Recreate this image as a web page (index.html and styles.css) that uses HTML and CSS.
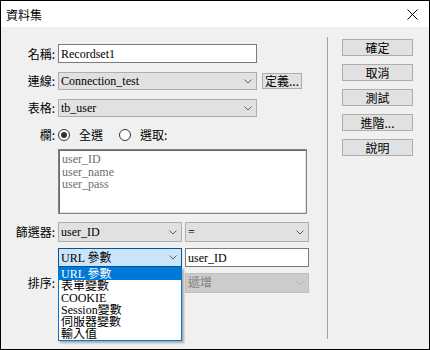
FILE: index.html
```html
<!DOCTYPE html>
<html lang="zh-Hant">
<head>
    <meta charset="UTF-8">
    <title>資料集</title>
    <link rel="stylesheet" href="styles.css">
</head>
<body>
    <div class="dialog">
        <div class="titlebar">
            <span class="title">資料集</span>
            <svg class="close" width="11" height="11" viewBox="0 0 11 11"><path d="M0.5 0.5L10.5 10.5M10.5 0.5L0.5 10.5" stroke="#000" stroke-width="1" fill="none"/></svg>
        </div>
        <div class="body">
            <div class="form">
                <div class="row row-name">
                    <span class="lbl">名稱:</span>
                    <div class="field text wide">Recordset1</div>
                </div>
                <div class="row row-conn">
                    <span class="lbl">連線:</span>
                    <div class="field select wide">
                        <span>Connection_test</span>
                        <svg class="chev" width="8" height="5" viewBox="0 0 8 5"><path d="M0.5 0.5L4 4L7.5 0.5" fill="none" stroke="#606060"/></svg>
                    </div>
                    <div class="btn btn-define">定義...</div>
                </div>
                <div class="row row-table">
                    <span class="lbl">表格:</span>
                    <div class="field select wide">
                        <span>tb_user</span>
                        <svg class="chev" width="8" height="5" viewBox="0 0 8 5"><path d="M0.5 0.5L4 4L7.5 0.5" fill="none" stroke="#606060"/></svg>
                    </div>
                </div>
                <div class="row row-cols">
                    <span class="lbl">欄:</span>
                    <span class="radio checked"></span>
                    <span class="radio-text">全選</span>
                    <span class="radio"></span>
                    <span class="radio-text">選取:</span>
                </div>
                <div class="listbox">
                    <div>user_ID</div>
                    <div>user_name</div>
                    <div>user_pass</div>
                </div>
                <div class="row row-filter">
                    <span class="lbl">篩選器:</span>
                    <div class="field select half">
                        <span>user_ID</span>
                        <svg class="chev" width="8" height="5" viewBox="0 0 8 5"><path d="M0.5 0.5L4 4L7.5 0.5" fill="none" stroke="#606060"/></svg>
                    </div>
                    <div class="field select half gap">
                        <span>=</span>
                        <svg class="chev" width="8" height="5" viewBox="0 0 8 5"><path d="M0.5 0.5L4 4L7.5 0.5" fill="none" stroke="#606060"/></svg>
                    </div>
                </div>
                <div class="row row-param">
                    <span class="lbl"></span>
                    <div class="field select half focused">
                        <span>URL 參數</span>
                        <svg class="chev" width="8" height="5" viewBox="0 0 8 5"><path d="M0.5 0.5L4 4L7.5 0.5" fill="none" stroke="#606060"/></svg>
                    </div>
                    <div class="field text half gap">user_ID</div>
                    <div class="dropdown">
                        <div class="option active">URL 參數</div>
                        <div class="option">表單變數</div>
                        <div class="option">COOKIE</div>
                        <div class="option">Session變數</div>
                        <div class="option">伺服器變數</div>
                        <div class="option">輸入值</div>
                    </div>
                </div>
                <div class="row row-sort">
                    <span class="lbl">排序:</span>
                    <div class="field select half disabled"></div>
                    <div class="field select half gap disabled">
                        <span>遞增</span>
                        <svg class="chev" width="8" height="5" viewBox="0 0 8 5"><path d="M0.5 0.5L4 4L7.5 0.5" fill="none" stroke="#b4b4b4"/></svg>
                    </div>
                </div>
            </div>
            <div class="sep"></div>
            <div class="actions">
                <div class="btn">確定</div>
                <div class="btn">取消</div>
                <div class="btn">測試</div>
                <div class="btn">進階...</div>
                <div class="btn">說明</div>
            </div>
        </div>
    </div>
</body>
</html>
```

FILE: styles.css
```css
body {
    margin: 0;
    font-family: "Noto Sans CJK TC", sans-serif;
    font-size: 12px;
    color: #000;
}
.dialog {
    width: 430px;
    height: 350px;
    border: 1px solid #000;
    box-sizing: border-box;
    background-color: #f0f0f0;
}
.titlebar {
    height: 26px;
    background-color: #fff;
    display: flex;
    align-items: center;
    justify-content: space-between;
    padding: 0 11px 0 5px;
}
.title {
    font-size: 12px;
    line-height: 1;
    margin-top: 1px;
}
.close {
    display: block;
}
.body {
    display: flex;
    height: 322px;
}
.form {
    width: 326px;
}
.row {
    display: flex;
    align-items: center;
    position: relative;
}
.lbl {
    width: 54px;
    padding-right: 3px;
    text-align: right;
    line-height: 1;
    flex-shrink: 0;
}
.row-name {
    margin-top: 17px;
    height: 19px;
}
.row-conn,
.row-table {
    margin-top: 9px;
    height: 18px;
}
.row-cols {
    margin-top: 11px;
    height: 14px;
}
.row-filter {
    margin-top: 8px;
    height: 20px;
}
.row-param {
    margin-top: 6px;
    height: 19px;
}
.row-sort {
    margin-top: 6px;
    height: 20px;
}
.field {
    height: 100%;
    box-sizing: border-box;
    display: flex;
    align-items: center;
    font-family: "Liberation Serif", "Noto Sans CJK TC", serif;
    font-size: 12px;
    line-height: 1;
    padding: 0 2px;
}
.field.wide {
    width: 199px;
}
.field.half {
    width: 124px;
}
.field.gap {
    margin-left: 3px;
}
.text {
    background-color: #fff;
    border: 1px solid #7a7a7a;
}
.select {
    background-color: #e1e1e1;
    border: 1px solid #adadad;
    justify-content: space-between;
    padding-right: 4px;
}
.select.focused {
    background-color: #cce4f7;
    border-color: #005499;
}
.select.disabled {
    background-color: #cccccc;
    border-color: #bfbfbf;
    color: #838383;
}
.chev {
    display: block;
}
.btn {
    background-color: #e1e1e1;
    border: 1px solid #adadad;
    box-sizing: border-box;
    text-align: center;
    line-height: 15px;
    height: 17px;
    font-size: 12px;
}
.btn-define {
    width: 40px;
    height: 16px;
    line-height: 14px;
    margin-left: 5px;
}
.radio {
    width: 12px;
    height: 12px;
    border: 1px solid #333;
    border-radius: 50%;
    box-sizing: border-box;
    background-color: #fff;
    position: relative;
}
.radio.checked::after {
    content: "";
    position: absolute;
    left: 2px;
    top: 2px;
    width: 6px;
    height: 6px;
    border-radius: 50%;
    background-color: #333;
}
.radio-text {
    margin-left: 9px;
    margin-right: 16px;
    line-height: 1;
}
.listbox {
    margin: 7px 0 0 57px;
    width: 249px;
    height: 65px;
    box-sizing: border-box;
    background-color: #fff;
    border: 1px solid #828282;
    box-shadow: inset 1px 1px 0 #696969, inset -1px -1px 0 #e3e3e3;
    padding: 3px 3px;
    font-family: "Liberation Serif", serif;
    font-size: 12px;
    line-height: 12.5px;
    color: #6d6d6d;
}
.dropdown {
    position: absolute;
    left: 57px;
    top: 19px;
    width: 124px;
    box-sizing: border-box;
    border: 1px solid #0078d7;
    background-color: #fff;
    box-shadow: 2px 2px 2px rgba(0,0,0,0.3);
    z-index: 2;
}
.option {
    height: 12px;
    line-height: 12px;
    padding-left: 2px;
    font-family: "Liberation Serif", "Noto Sans CJK TC", serif;
    font-size: 12px;
    white-space: nowrap;
    overflow: hidden;
}
.option.active {
    background-color: #0078d7;
    color: #fff;
}
.sep {
    width: 1px;
    background-color: #a0a0a0;
    margin: 10px 0 10px 0;
}
.actions {
    padding: 12px 0 0 14px;
    display: flex;
    flex-direction: column;
    gap: 8px;
}
.actions .btn {
    width: 71px;
}
```
